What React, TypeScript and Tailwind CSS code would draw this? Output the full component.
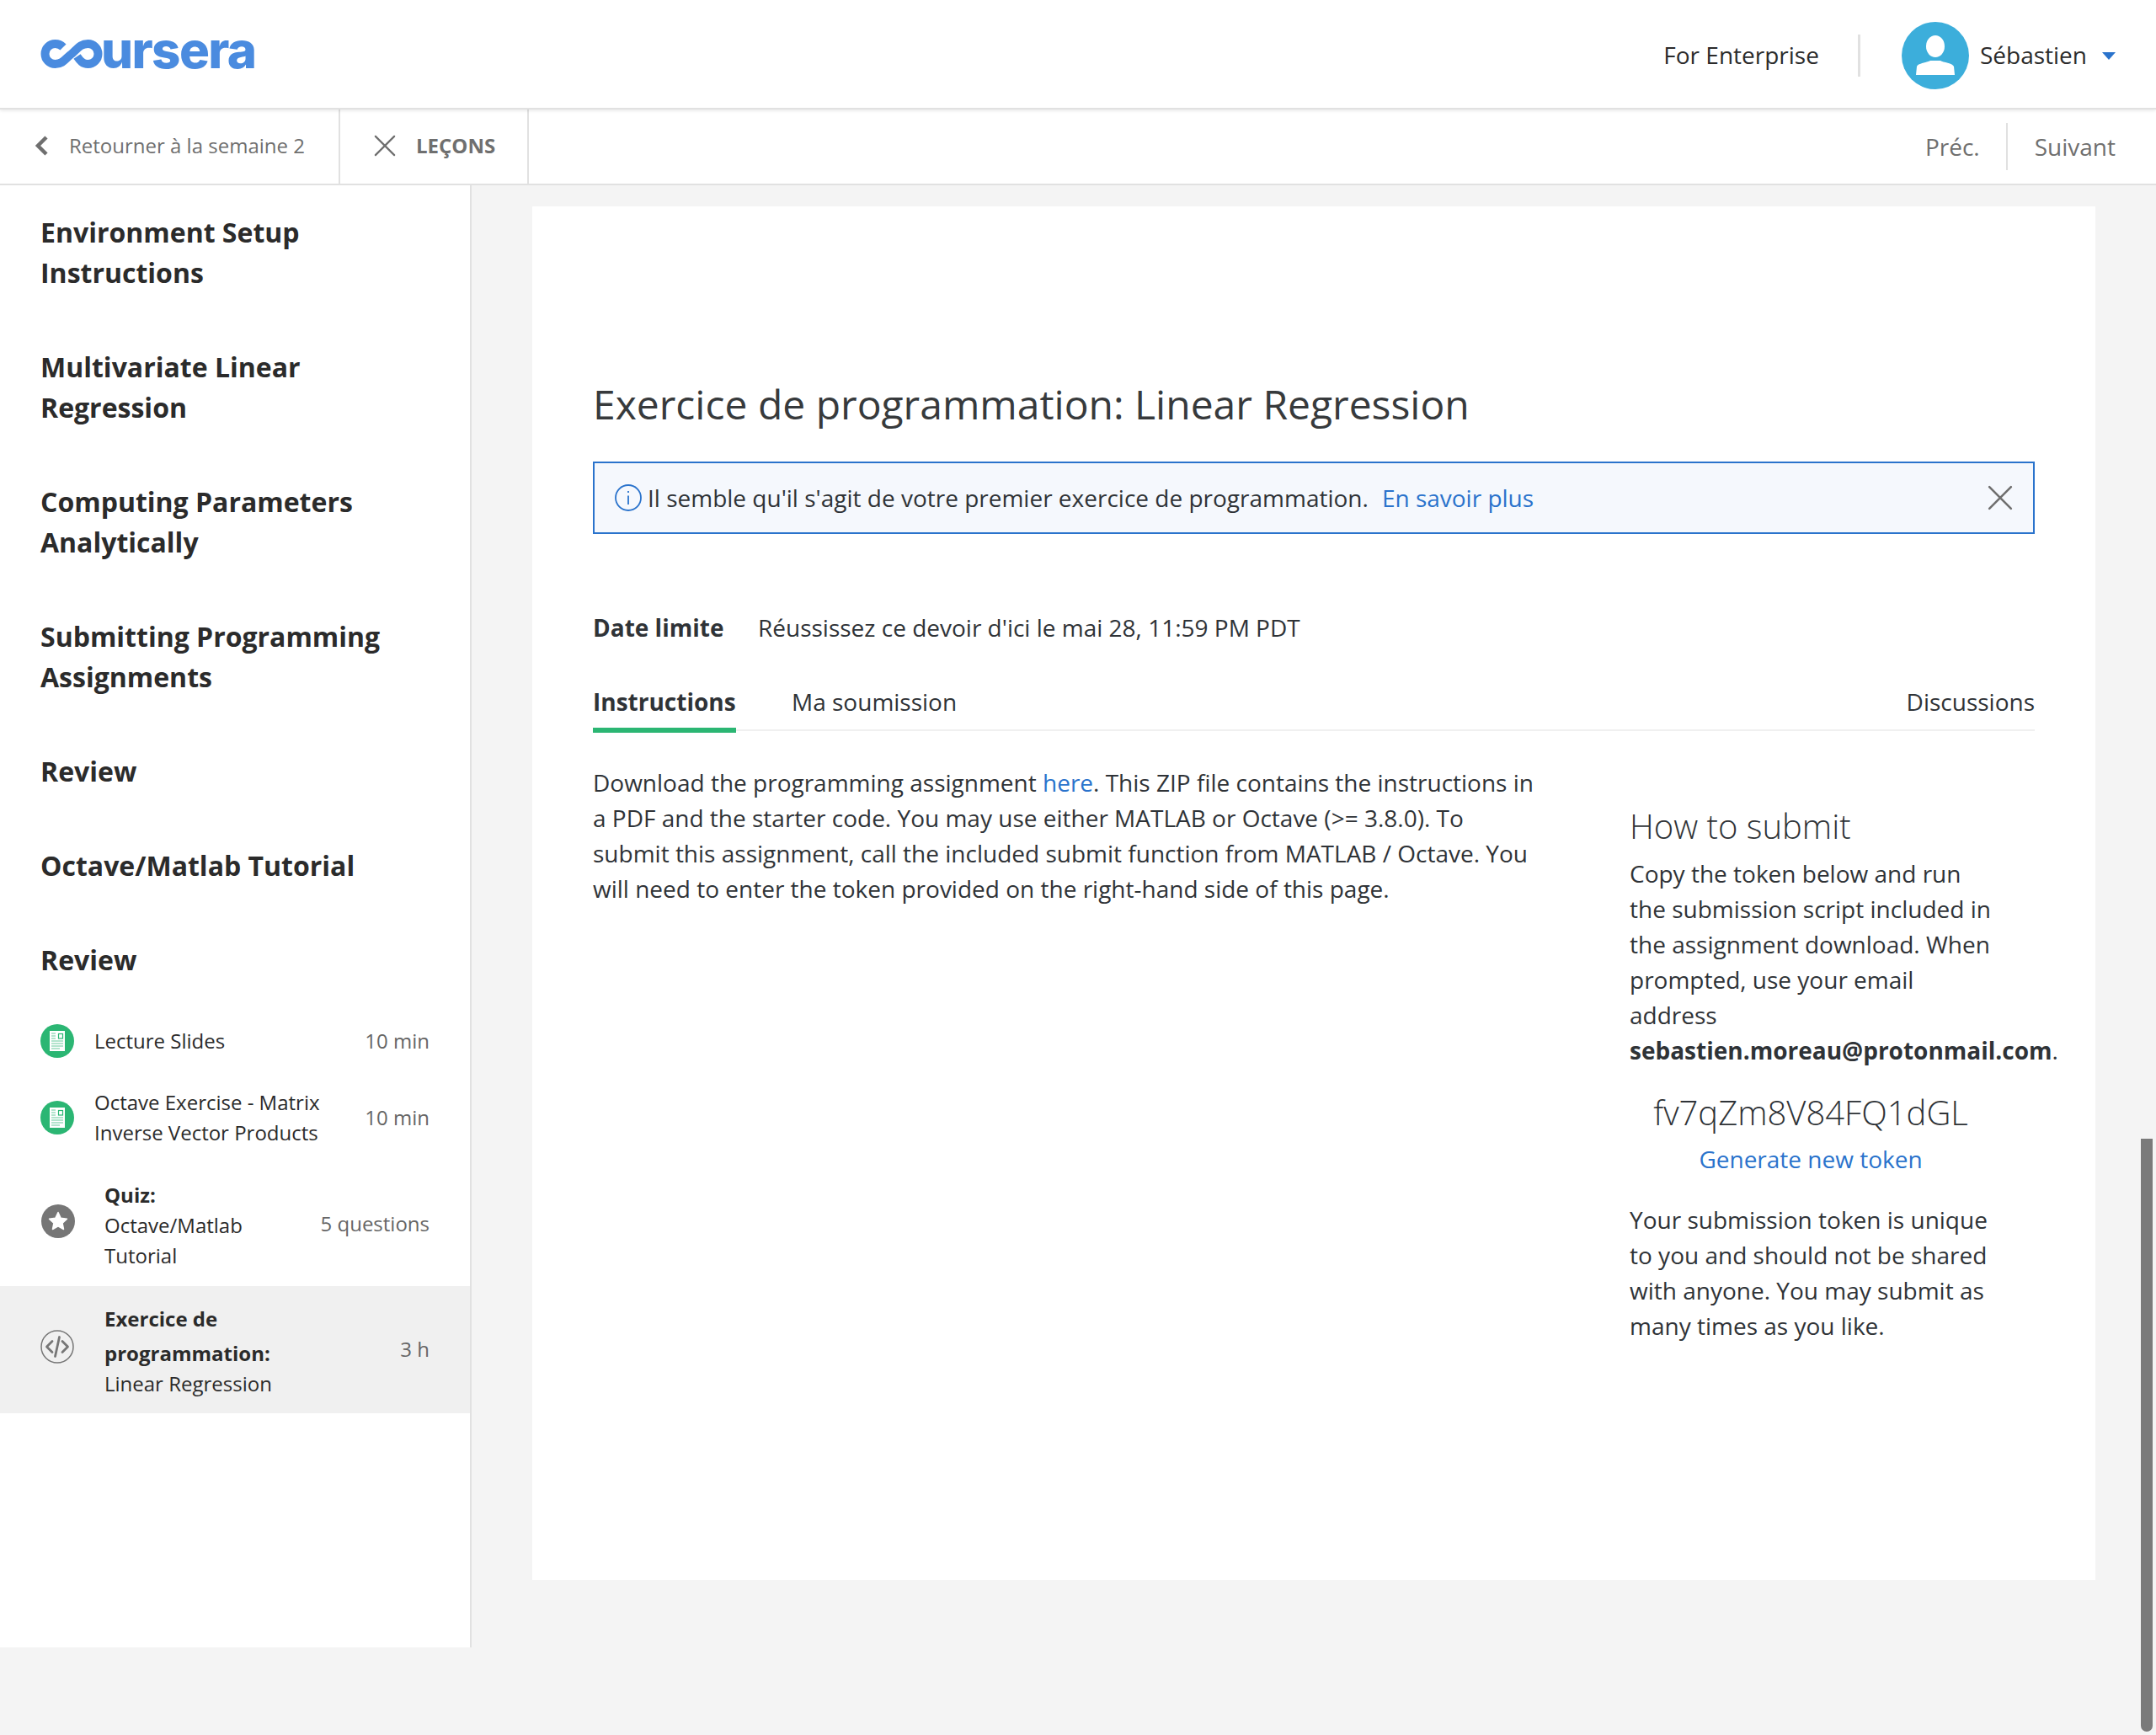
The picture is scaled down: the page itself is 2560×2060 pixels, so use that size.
const headings = [
  ["Environment Setup", "Instructions"],
  ["Multivariate Linear", "Regression"],
  ["Computing Parameters", "Analytically"],
  ["Submitting Programming", "Assignments"],
  ["Review"],
  ["Octave/Matlab Tutorial"],
  ["Review"],
];

function Logo() {
  return (
    <div className="flex items-center">
      <svg width="74" height="34" viewBox="0 0 74 34" fill="none" stroke="#4a8bdf" strokeWidth="10">
        <path d="M27 9 C24.500 6.500 21 5 17.500 5 A12 12 0 1 0 17.500 29 C27 29 30 22 37 17 C44 11 47 5 56.500 5 A12 12 0 1 1 56.500 29 C50 29 47 25 43.500 20" />
      </svg>
      <span className="-ml-[2px] -mt-[10px] text-[60px] leading-none font-extrabold tracking-[-1.6px] text-[#4a8bdf] font-['Inter',sans-serif]">
        ursera
      </span>
    </div>
  );
}

function DocIcon() {
  return (
    <div className="w-[40px] h-[40px] rounded-full bg-[#2bb673] flex items-center justify-center shrink-0">
      <svg width="18" height="24" viewBox="0 0 18 24">
        <rect width="18" height="24" fill="#fff" />
        <path d="M2 3h5M2 6h5M2 9h5M2 12h14M2 15h14M2 18h14M2 21h10" stroke="#2bb673" strokeWidth="1.200" opacity="0.7" />
        <rect x="10.500" y="3.500" width="5" height="5.500" fill="none" stroke="#2bb673" strokeWidth="1.200" />
      </svg>
    </div>
  );
}

function StarIcon() {
  return (
    <svg width="40" height="40" viewBox="0 0 40 40" className="shrink-0 ml-[1px] -mt-[5px]">
      <circle cx="20" cy="20" r="20" fill="#767676" />
      <path d="M20 9.500 L23.200 16.300 L30.500 17.200 L25.100 22.300 L26.500 29.500 L20 25.900 L13.500 29.500 L14.900 22.300 L9.500 17.200 L16.800 16.300 Z" fill="#fff" stroke="#fff" strokeWidth="1.500" strokeLinejoin="round" />
    </svg>
  );
}

function CodeIcon() {
  return (
    <svg width="40" height="40" viewBox="0 0 40 40" fill="none" stroke="#767676" className="shrink-0 -mt-[7px]">
      <circle cx="20" cy="20" r="19" strokeWidth="1.500" />
      <path d="M14 13.500 L7.500 20 L14 26.500 M26 13.500 L32.500 20 L26 26.500 M22.500 8.500 L17.500 31.500" strokeWidth="2.800" strokeLinecap="round" strokeLinejoin="round" />
    </svg>
  );
}

function CloseIcon({ size = 28 }: { size?: number }) {
  return (
    <svg width={size} height={size} viewBox="0 0 28 28" fill="none" stroke="#6f6f6f" strokeWidth="2.400" strokeLinecap="round">
      <path d="M2 2 L26 26 M26 2 L2 26" />
    </svg>
  );
}

function Header() {
  return (
    <header className="h-[130px] bg-white border-b-2 border-[#e1e1e1] shadow-[0_2px_3px_rgba(0,0,0,0.08)] relative flex items-center justify-between pl-[48px] pr-[48px]">
      <Logo />
      <div className="flex items-center pt-[4px] text-[#2b2b2b]">
        <span className="text-[28px] -mt-[3px]">For Enterprise</span>
        <div className="w-[3px] h-[50px] bg-[#e1e1e1] ml-[46px] mr-[49px]" />
        <svg width="80" height="80" viewBox="0 0 80 80">
          <circle cx="40" cy="40" r="40" fill="#3caedb" />
          <ellipse cx="40" cy="29" rx="11" ry="13" fill="#fff" />
          <path d="M17 63 L18 53 C19 49 31 48 34 46 L46 46 C49 48 61 49 62 53 L63 63 Z" fill="#fff" />
        </svg>
        <span className="text-[28px] ml-[13px] -mt-[3px]">Sébastien</span>
        <svg width="16" height="9" viewBox="0 0 16 9" className="ml-[18px]">
          <path d="M0 0 H16 L8 9 Z" fill="#2a73cc" />
        </svg>
      </div>
    </header>
  );
}

function NavBar() {
  return (
    <div className="h-[90px] bg-white border-b-2 border-[#e1e1e1] flex items-stretch justify-between text-[#6f6f6f]">
      <div className="flex">
        <div className="w-[404px] flex items-center pl-[41px] pb-[3px] border-r-2 border-[#e1e1e1]">
          <svg width="16" height="24" viewBox="0 0 16 24" fill="none" stroke="#6f6f6f" strokeWidth="4.500">
            <path d="M14 2 L4 12 L14 22" />
          </svg>
          <span className="ml-[25px] text-[24px]">Retourner à la semaine 2</span>
        </div>
        <div className="w-[224px] flex items-center pl-[40px] pb-[3px] border-r-2 border-[#e1e1e1]">
          <CloseIcon size={26} />
          <span className="ml-[24px] text-[24px] font-bold">LEÇONS</span>
        </div>
      </div>
      <div className="flex items-center pr-[48px] text-[28px]">
        <span>Préc.</span>
        <div className="w-[2px] h-[56px] bg-[#e1e1e1] ml-[31px] mr-[32px]" />
        <span>Suivant</span>
      </div>
    </div>
  );
}

function Sidebar() {
  return (
    <aside className="w-[560px] h-[1736px] bg-white border-r-2 border-[#e1e1e1] shrink-0 text-[#2b2b2b]">
      {headings.map((lines, i) => (
        <h2 key={i} className="px-[48px] py-[32px] text-[32px] leading-[48px] font-bold">
          {lines.map((line) => (
            <div key={line}>{line}</div>
          ))}
        </h2>
      ))}

      <div className="h-[80px] pl-[48px] pr-[48px] flex items-center text-[24px]">
        <DocIcon />
        <span className="ml-[24px] flex-1">Lecture Slides</span>
        <span className="text-[#666]">10 min</span>
      </div>
      <div className="h-[102px] pl-[48px] pr-[48px] flex items-center text-[24px] leading-[36px]">
        <DocIcon />
        <span className="ml-[24px] flex-1">
          Octave Exercise - Matrix
          <br />
          Inverse Vector Products
        </span>
        <span className="text-[#666]">10 min</span>
      </div>
      <div className="h-[149px] pl-[48px] pr-[48px] flex items-center text-[24px] leading-[36px]">
        <StarIcon />
        <div className="ml-[35px] flex-1 pt-[5px]">
          <div className="font-bold">Quiz:</div>
          <div>Octave/Matlab</div>
          <div>Tutorial</div>
        </div>
        <span className="text-[#666]">5 questions</span>
      </div>
      <div className="h-[151px] pl-[48px] pr-[48px] flex items-center text-[24px] bg-[#f0f0f0]">
        <CodeIcon />
        <div className="ml-[36px] flex-1">
          <div className="font-bold leading-[41px]">
            Exercice de
            <br />
            programmation:
          </div>
          <div className="leading-[36px] -mt-[2px]">Linear Regression</div>
        </div>
        <span className="text-[#666] -mt-[2px]">3 h</span>
      </div>
    </aside>
  );
}

function Card() {
  return (
    <div className="mt-[25px] ml-[72px] w-[1856px] h-[1631px] bg-white px-[72px] pt-[208px] text-[#2f3337]">
      <h1 className="text-[48px] leading-[54px] text-[#373a3c]">Exercice de programmation: Linear Regression</h1>

      <div className="mt-[41px] h-[86px] border-2 border-[#2a73cc] bg-[#f5f8fd] flex items-center pl-[24px] pr-[24px] text-[28px]">
        <svg width="32" height="32" viewBox="0 0 32 32" fill="none" stroke="#2a73cc" strokeWidth="1.800" className="shrink-0">
          <circle cx="16" cy="16" r="15" />
          <path d="M16 13.500 V24 M16 8 V10" strokeWidth="1.800" />
        </svg>
        <span className="ml-[7px]">Il semble qu'il s'agit de votre premier exercice de programmation.</span>
        <span className="ml-[16px] text-[#2a73cc] flex-1">En savoir plus</span>
        <CloseIcon size={30} />
      </div>

      <div className="mt-[90px] flex items-center text-[28px] leading-[42px]">
        <span className="w-[196px] font-bold">Date limite</span>
        <span>Réussissez ce devoir d'ici le mai 28, 11:59 PM PDT</span>
      </div>

      <div className="mt-[46px] h-[42px] flex text-[28px] leading-[42px]">
        <span className="font-bold w-[170px]">Instructions</span>
        <span className="ml-[66px] flex-1">Ma soumission</span>
        <span>Discussions</span>
      </div>
      <div className="mt-[12px] h-[2px] bg-[#f0f0f0] relative">
        <div className="absolute left-0 -top-[2px] w-[170px] h-[6px] bg-[#2bb673]" />
      </div>

      <div className="flex text-[28px] leading-[42px]">
        <p className="w-[1231px] shrink-0 pr-[100px] pt-[40px]">
          Download the programming assignment <span className="text-[#2a73cc]">here</span>. This ZIP file contains the
          instructions in a PDF and the starter code. You may use either MATLAB or Octave (&gt;= 3.8.0). To submit this
          assignment, call the included submit function from MATLAB / Octave. You will need to enter the token provided
          on the right-hand side of this page.
        </p>
        <div className="w-[430px] pt-[86px]">
          <h3 className="text-[40px] leading-[54px] font-light">How to submit</h3>
          <p className="mt-[8px]">
            Copy the token below and run the submission script included in the assignment download. When prompted, use
            your email address <b className="whitespace-nowrap">sebastien.moreau@protonmail.com</b>.
          </p>
          <div className="mt-[26px] text-center text-[40px] leading-[54px] font-light whitespace-nowrap">fv7qZm8V84FQ1dGL</div>
          <div className="mt-[7px] text-center text-[#2a73cc]">Generate new token</div>
          <p className="mt-[30px]">
            Your submission token is unique to you and should not be shared with anyone. You may submit as many times as
            you like.
          </p>
        </div>
      </div>
    </div>
  );
}

export default function App() {
  return (
    <div className="relative w-[2560px] h-[2060px] overflow-hidden bg-[#f4f4f4] font-['Open_Sans',sans-serif]">
      <Header />
      <NavBar />
      <div className="flex">
        <Sidebar />
        <Card />
      </div>
      {/* page scrollbar */}
      <div className="absolute left-[2542px] top-[1352px] w-[14px] h-[704px] bg-[#7a7a7a] rounded-b-[7px]" />
    </div>
  );
}
